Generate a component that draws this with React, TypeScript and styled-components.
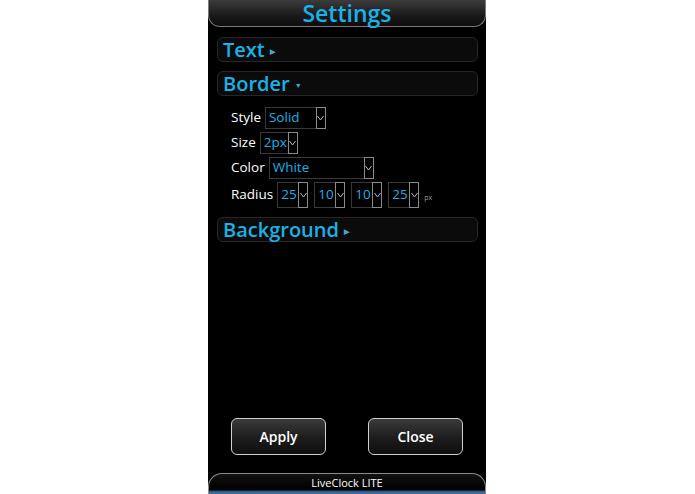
import React from "react";
import styled, { createGlobalStyle } from "styled-components";

const Global = createGlobalStyle`
  html, body { margin: 0; padding: 0; background: #fff; }
  body { font-family: "Open Sans", "Noto Sans", sans-serif; }
`;

const Page = styled.div`
  width: 695px;
  height: 494px;
  box-sizing: border-box;
  display: flex;
  padding-left: 208px;
  background: #fff;
`;

const Phone = styled.div`
  width: 278px;
  height: 494px;
  background: #000;
  display: flex;
  flex-direction: column;
`;

const Header = styled.div`
  height: 27px;
  box-sizing: border-box;
  background: linear-gradient(#3b3b3b, #1a1a1a 60%, #0c0c0c);
  border: 1px solid #7a7a7a;
  border-top: none;
  border-radius: 0 0 12px 12px;
  display: flex;
  align-items: center;
  justify-content: center;
  color: #1cb1e6;
  font-size: 23px;
  font-weight: 600;
  line-height: 26px;
`;

const Body = styled.div`
  flex: 1;
  display: flex;
  flex-direction: column;
  padding: 10px 8px 0 9px;
`;

const SectionBar = styled.div<{ $gap?: number }>`
  height: 25px;
  box-sizing: border-box;
  border: 1px solid #262626;
  border-radius: 6px;
  background: #0b0b0b;
  display: flex;
  align-items: center;
  padding-left: 5px;
  margin-top: ${(p) => p.$gap ?? 0}px;
  color: #1cb1e6;
  font-size: 20px;
  font-weight: 600;
  line-height: 1;
`;

const Caret = styled.span`
  color: #4aa6cf;
  font-size: 7px;
  margin-left: 5px;
  margin-top: 3px;
`;

const Form = styled.div`
  display: flex;
  flex-direction: column;
  gap: 3px;
  padding: 11px 0 9px 14px;
`;

const FieldRow = styled.div<{ $h?: number }>`
  display: flex;
  align-items: center;
  gap: 4px;
  height: ${(p) => p.$h ?? 22}px;
`;

const Label = styled.span`
  color: #fff;
  font-size: 13.5px;
  line-height: 1;
`;

const Select = styled.div<{ $w: number; $h?: number }>`
  display: flex;
  width: ${(p) => p.$w}px;
  height: ${(p) => p.$h ?? 22}px;
  box-sizing: border-box;
`;

const ValueBox = styled.div`
  flex: 1;
  border: 1px solid #3a3a3a;
  border-right: none;
  display: flex;
  align-items: center;
  padding-left: 3px;
  color: #1cb1e6;
  font-size: 13.5px;
  line-height: 1;
  overflow: hidden;
  white-space: nowrap;
`;

const ArrowBox = styled.div`
  width: 10px;
  border: 1px solid #8a8a8a;
  box-sizing: border-box;
  display: flex;
  align-items: center;
  justify-content: center;
`;

const RadiusGroup = styled.div`
  display: flex;
  align-items: center;
  gap: 6px;
`;

const Unit = styled.span`
  color: #999;
  font-size: 7px;
  margin-left: -1px;
  margin-top: 4px;
`;

const Spacer = styled.div`
  flex: 1;
`;

const ButtonRow = styled.div`
  display: flex;
  justify-content: space-between;
  padding: 0 23px;
  margin-bottom: 18px;
`;

const Button = styled.button`
  width: 95px;
  height: 37px;
  border: 1px solid #d0d0d0;
  border-radius: 6px;
  background: linear-gradient(#3a3a3a, #1c1c1c 55%, #0e0e0e);
  color: #fff;
  font-family: "Open Sans", "Noto Sans", sans-serif;
  font-size: 14px;
  font-weight: 600;
  padding: 0;
`;

const Footer = styled.div`
  height: 21px;
  box-sizing: border-box;
  border: 1px solid #8a8a8a;
  border-bottom: none;
  border-radius: 14px 14px 0 0;
  background: linear-gradient(#111 0%, #000 80%, #2a5a86 86%, #3d76a8 100%);
  display: flex;
  justify-content: center;
  padding-top: 2px;
  color: #fff;
  font-size: 11px;
  line-height: 14px;
`;

const Chevron = () => (
  <svg width="7" height="6" viewBox="0 0 7 6">
    <path d="M0.5 1 L3.5 5 L6.5 1" stroke="#bbb" strokeWidth="1" fill="none" />
  </svg>
);

const Dropdown = ({ w, value, h }: { w: number; value: string; h?: number }) => (
  <Select $w={w} $h={h}>
    <ValueBox>{value}</ValueBox>
    <ArrowBox>
      <Chevron />
    </ArrowBox>
  </Select>
);

export default function App() {
  return (
    <Page>
      <Global />
      <Phone>
        <Header>Settings</Header>
        <Body>
          <SectionBar>
            Text<Caret>▶</Caret>
          </SectionBar>
          <SectionBar $gap={9}>
            Border<Caret>▼</Caret>
          </SectionBar>
          <Form>
            <FieldRow>
              <Label>Style</Label>
              <Dropdown w={61} value="Solid" />
            </FieldRow>
            <FieldRow>
              <Label>Size</Label>
              <Dropdown w={38} value="2px" />
            </FieldRow>
            <FieldRow>
              <Label>Color</Label>
              <Dropdown w={105} value="White" />
            </FieldRow>
            <FieldRow $h={26}>
              <Label>Radius</Label>
              <RadiusGroup>
                <Dropdown w={31} h={26} value="25" />
                <Dropdown w={31} h={26} value="10" />
                <Dropdown w={31} h={26} value="10" />
                <Dropdown w={31} h={26} value="25" />
                <Unit>px</Unit>
              </RadiusGroup>
            </FieldRow>
          </Form>
          <SectionBar>
            Background<Caret>▶</Caret>
          </SectionBar>
          <Spacer />
        </Body>
        <ButtonRow>
          <Button>Apply</Button>
          <Button>Close</Button>
        </ButtonRow>
        <Footer>LiveClock LITE</Footer>
      </Phone>
    </Page>
  );
}
